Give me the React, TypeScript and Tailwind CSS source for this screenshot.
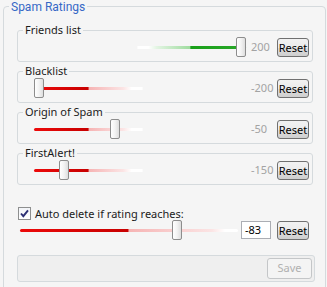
import type { ReactNode } from "react";

const RED_HALF =
  "linear-gradient(to right, #ec0a0a 0%, #c80000 25.5%, #f6b4b4 26%, #fbe4e4 42%, #ffffff 46%, #ffffff 51%, transparent 51.5%)";
const GREEN_HALF =
  "linear-gradient(to right, transparent 48.5%, #ffffff 49%, #ffffff 54%, #e2f4e2 58%, #9fdc9f 73.5%, #19a019 74%, #2aa82a 100%)";
const RED_FULL =
  "linear-gradient(to right, #ec0a0a 0%, #c80000 49.5%, #f6b4b4 50%, #fbe4e4 88%, #ffffff 94%, #ffffff 100%)";

interface SliderProps {
  track: string;
  pct: number;
  width: number;
  className: string;
}

function Slider({ track, pct, width, className }: SliderProps) {
  const left = Math.round((pct / 100) * (width - 10));
  return (
    <div className={`relative flex h-[20px] items-center ${className}`}>
      <div className="h-[3px] w-full rounded-full" style={{ backgroundImage: track }} />
      <div
        className="absolute top-0 h-[20px] w-[10px] rounded-[2px] border border-[#8d8d8d] bg-[linear-gradient(to_right,#ffffff,#f3f3f3_50%,#dedede)]"
        style={{ left }}
      />
    </div>
  );
}

function ResetButton() {
  return (
    <button className="flex h-[19px] w-[32px] items-center justify-center rounded-[3px] border border-[#707070] bg-[linear-gradient(to_bottom,#f2f2f2_0%,#ebebeb_50%,#dddddd_50%,#cfcfcf_100%)] text-[11px] leading-none text-black">
      Reset
    </button>
  );
}

interface RatingProps {
  title: string;
  value: number;
}

function Rating({ title, value }: RatingProps) {
  const pct = ((value + 200) / 400) * 100;
  return (
    <fieldset className="ml-[13px] w-[296px] rounded-[3px] border border-[#d5dadd] pb-[4px] pt-[1px]">
      <legend className="ml-[5px] px-[2px] leading-[12px] text-[#1b1b1b]">{title}</legend>
      <div className="flex items-center pl-[16px]">
        <Slider track={value > 0 ? GREEN_HALF : RED_HALF} pct={pct} width={212} className="w-[212px]" />
        <span className="ml-[5px] w-[26px] text-[11px] text-[#a3a3a3]">{value}</span>
        <ResetButton />
      </div>
    </fieldset>
  );
}

function GroupLegend({ children }: { children: ReactNode }) {
  return (
    <legend className="ml-[5px] px-[2px] pt-[1px] font-['Roboto',sans-serif] text-[12px] leading-[12px] text-[#3568c6]">
      {children}
    </legend>
  );
}

export default function App() {
  return (
    <div className="h-[287px] w-[327px] overflow-hidden bg-[#f5f5f5] font-['Noto_Sans',sans-serif] text-[11px]">
      <fieldset className="ml-[3px] w-[323px] rounded-[4px] border border-[#d5dadd] pb-[20px] pt-[11px]">
        <GroupLegend>Spam Ratings</GroupLegend>
        <div className="flex flex-col gap-[3px]">
          <Rating title="Friends list" value={200} />
          <Rating title="Blacklist" value={-200} />
          <Rating title="Origin of Spam" value={-50} />
          <Rating title="FirstAlert!" value={-150} />
        </div>

        <div className="ml-[14px] mt-[22px] flex h-[13px] items-center">
          <div className="flex h-[13px] w-[13px] items-center justify-center border border-[#8e8f8f] bg-[linear-gradient(to_bottom,#f2f4f8,#ffffff)]">
            <svg width="11" height="11" viewBox="0 0 11 11">
              <path d="M2 5.5 L4.3 8.2 L9 2.3" fill="none" stroke="#2c2f74" strokeWidth="1.9" />
            </svg>
          </div>
          <span className="ml-[4px] leading-[13px] text-[#1b1b1b]">Auto delete if rating reaches:</span>
        </div>

        <div className="flex items-center">
          <Slider track={RED_FULL} pct={73} width={218} className="ml-[16px] w-[218px]" />
          <div className="ml-[3px] flex h-[18px] w-[30px] items-center border border-[#abadb3] bg-white pl-[3px] text-[11px] text-black">
            -83
          </div>
          <div className="ml-[6px]">
            <ResetButton />
          </div>
        </div>

        <div className="ml-[13px] mt-[15px] flex h-[27px] w-[298px] items-center justify-end rounded-[3px] border border-[#d5dadd] bg-[#efefef] pr-[2px]">
          <button className="flex h-[21px] w-[45px] items-center justify-center rounded-[3px] border border-[#c4c6c8] bg-[#f4f4f4] text-[11px] text-[#b0b0b0]">
            Save
          </button>
        </div>
      </fieldset>
    </div>
  );
}
